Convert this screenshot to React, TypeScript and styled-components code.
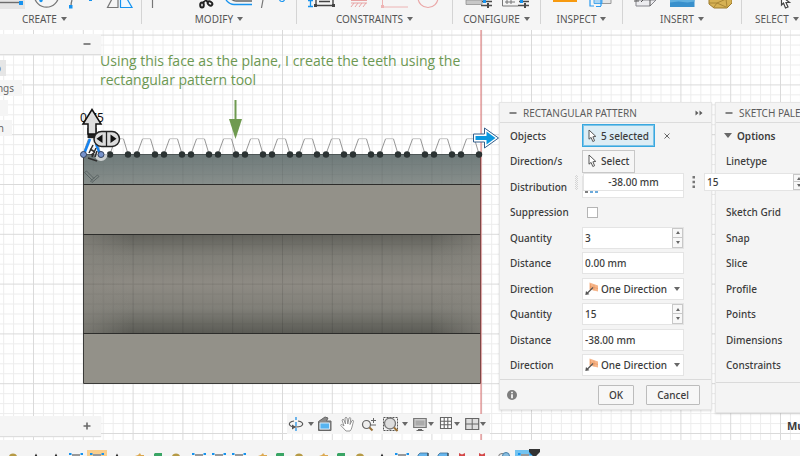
import React from "react";
import styled, { createGlobalStyle, css } from "styled-components";

const GlobalStyle = createGlobalStyle`
  * { box-sizing: border-box; }
  html, body { margin: 0; padding: 0; }
  body, button, input, select {
    font-family: "Noto Sans", "Open Sans", sans-serif;
    font-size: 10px;
    color: #3c3c3c;
  }
  body { overflow: hidden; }
  button, input, select { margin: 0; padding: 0; border: 0; background: none; border-radius: 0; }
`;

const Page = styled.div`
  display: flex;
  flex-direction: column;
  height: 100vh;
  background: #fff;
`;

/* Ribbon */

const Ribbon = styled.header`
  display: grid;
  grid-template-columns: 142fr 155fr 156fr 88fr 82fr 119fr 58fr;
  flex: none;
  height: 30px;
  background: #f5f5f5;
  overflow: hidden;
`;

const RibbonGroup = styled.section<{ $align?: "start" | "center" | "clip" }>`
  display: flex;
  flex-direction: column;
  align-items: ${(p) => (p.$align === "clip" ? "flex-start" : "center")};
  min-width: 0;
  height: 24px;
  border-right: 1px solid #d4d4d4;
  ${(p) => p.$align === "start" && css`align-items: flex-start;`}
  &:last-child { border-right: 0; }
`;

const RibbonIcons = styled.svg`
  display: block;
  flex: none;
  height: 11px;
`;

const RibbonLabel = styled.button<{ $inset?: number }>`
  display: flex;
  align-items: center;
  gap: 4px;
  flex: none;
  height: 16px;
  margin-left: ${(p) => p.$inset ?? 0}px;
  color: #555;
  font-size: 10px;
  line-height: 16px;
  white-space: nowrap;
`;

const Caret = styled.span<{ $up?: boolean; $small?: boolean; $large?: boolean }>`
  display: block;
  flex: none;
  width: 0;
  height: 0;
  border: solid transparent;
  border-width: ${(p) => (p.$small ? "0 2px" : p.$large ? "0 4px" : "0 3px")};
  ${(p) => (p.$up ? "border-bottom" : "border-top")}: ${(p) => (p.$small ? 3 : p.$large ? 5 : 4)}px solid #686868;
`;

/* Canvas */

const Canvas = styled.main`
  position: relative;
  flex: 1;
  min-height: 0;
  overflow: hidden;
`;

const Drawing = styled.svg`
  display: block;
  width: 100%;
  height: 100%;
`;

const Note = styled.p`
  position: absolute;
  left: 100px;
  top: 21px;
  width: 370px;
  margin: 0;
  color: #6c9852;
  font-family: "Open Sans", "Noto Sans", sans-serif;
  font-size: 14px;
  line-height: 19px;
`;

const BrowserColumn = styled.aside`
  position: absolute;
  left: 0;
  top: 4px;
  bottom: 4px;
  width: 101px;
  display: flex;
  flex-direction: column;
  justify-content: space-between;
  pointer-events: none;
`;

const BrowserBar = styled.div`
  display: flex;
  align-items: center;
  justify-content: flex-end;
  height: 20px;
  padding-right: 9px;
  background: #f5f5f5;
  box-shadow: 0 1px 1px #ddd;
`;

const IconButton = styled.button`
  display: flex;
  align-items: center;
  justify-content: center;
  flex: none;
  width: 10px;
  height: 12px;
`;

const BrowserTree = styled.ul`
  display: flex;
  flex-direction: column;
  align-items: flex-start;
  gap: 4px;
  margin: 6px 0 0;
  padding: 0;
  list-style: none;
`;

const TreeItem = styled.li<{ $active?: boolean; $tail: number }>`
  display: flex;
  justify-content: flex-end;
  width: ${(p) => p.$tail}px;
  height: 16px;
  padding-right: ${(p) => (p.$active ? 5 : 8)}px;
  background: ${(p) => (p.$active ? "#e6e6e6" : "#f5f5f5")};
  color: #666;
  line-height: 16px;
`;

const NavBar = styled.nav`
  position: absolute;
  left: 287px;
  bottom: 6px;
  display: flex;
  align-items: center;
  height: 20px;
  padding: 0 4px 0 1px;
  background: #f5f5f5;
`;

const NavButton = styled.button<{ $size?: "wide" | "widest" }>`
  display: flex;
  align-items: center;
  justify-content: space-between;
  height: 20px;
  width: ${(p) => (p.$size === "widest" ? 28 : p.$size === "wide" ? 26 : 22)}px;
  svg { display: block; flex: none; }
`;

/* Floating panels */

const Panel = styled.section<{ $left: number; $width: number }>`
  position: absolute;
  left: ${(p) => p.$left}px;
  top: 72px;
  width: ${(p) => p.$width}px;
  background: #f4f4f4;
  border: 1px solid #e6e6e6;
  box-shadow: 0 1px 2px rgba(0, 0, 0, 0.14);
`;

const PanelHeader = styled.header`
  display: flex;
  align-items: center;
  gap: 5px;
  height: 20px;
  padding: 0 8px;
  border-bottom: 1px solid #dcdcdc;
`;

const PanelTitle = styled.h2`
  flex: 1;
  margin: 0;
  color: #5c5c5c;
  font-size: 10px;
  font-weight: 400;
  line-height: 18px;
  white-space: nowrap;
`;

const PanelBody = styled.div`
  display: grid;
  grid-auto-rows: 1fr;
  min-height: 256px;
  padding: 0 10px 1px;
`;

const Row = styled.div`
  display: flex;
  align-items: center;
`;

const RowLabel = styled.label`
  flex: none;
  width: 72px;
  font-weight: 500;
  line-height: 14px;
  white-space: nowrap;
`;

const PanelFooter = styled.footer`
  display: flex;
  align-items: center;
  gap: 12px;
  height: 30px;
  padding: 0 11px 0 7px;
  border-top: 1px solid #dadada;
`;

const DialogButton = styled.button<{ $width: number }>`
  width: ${(p) => p.$width}px;
  height: 20px;
  border: 1px solid #bcbcbc;
  border-radius: 1px;
  background: #f7f7f7;
  font-weight: 500;
`;

const Spacer = styled.span`
  flex: 1;
`;

const PickButton = styled.button<{ $active?: boolean }>`
  display: flex;
  align-items: center;
  gap: 4px;
  height: 23px;
  padding: 0 5px;
  border: ${(p) => (p.$active ? "1px solid #38a8e0" : "1px solid #c8c8c8")};
  box-shadow: ${(p) => (p.$active ? "inset 0 0 0 1px #7cc4e8" : "none")};
  background: ${(p) => (p.$active ? "#dcedf5" : "#f6f6f6")};
  font-weight: 500;
  white-space: nowrap;
`;

const ClearButton = styled(IconButton)`
  margin-left: 7px;
`;

const Field = styled.div`
  position: relative;
  display: flex;
  width: 102px;
  height: 22px;
  border: 1px solid #e4e4e4;
  background: #fff;
`;

const FieldInput = styled.input<{ $center?: boolean }>`
  flex: 1;
  min-width: 0;
  padding: 0 2px;
  text-align: ${(p) => (p.$center ? "center" : "left")};
  outline: none;
  font-weight: 500;
`;

const Spinner = styled.span`
  display: grid;
  grid-template-rows: 1fr 1fr;
  flex: none;
  width: 11px;
`;

const SpinButton = styled.button`
  display: flex;
  align-items: center;
  justify-content: center;
  border: 1px solid #c8c8c8;
  background: #f8f8f8;
  & + & { border-top: 0; }
`;

const Choice = styled.select`
  appearance: none;
  width: 100%;
  padding-left: 18px;
  outline: none;
  font-weight: 500;
`;

const ChoiceIcon = styled.svg`
  position: absolute;
  left: 2px;
  top: 3px;
  pointer-events: none;
`;

const ChoiceCaret = styled.span`
  position: absolute;
  right: 3px;
  top: 8px;
  pointer-events: none;
`;

const Tick = styled.input`
  appearance: none;
  width: 11px;
  height: 11px;
  margin: 0 0 0 5px;
  border: 1px solid #b4b4b4;
  background: #fff;
`;

const SectionButton = styled.button`
  display: flex;
  align-items: center;
  gap: 5px;
  margin-left: -2px;
  font-weight: 600;
`;

const PaletteFoot = styled.div`
  height: 30px;
  margin-top: 3px;
  border-top: 1px solid #dadada;
`;

const ManipulatorBar = styled.form`
  position: absolute;
  left: 575px;
  top: 143px;
  display: flex;
  align-items: center;
  height: 18px;
`;

const Grip = styled.span`
  width: 3px;
  height: 15px;
  margin-right: 5px;
  background: repeating-conic-gradient(#d4d4d4 0 25%, #f4f4f4 0 50%) 0 0 / 2px 2px;
`;

const BarField = styled(Field)`
  width: 101px;
  height: 18px;
`;

const MoreButton = styled(IconButton)`
  width: 20px;
  height: 16px;
`;

const Status = styled.output`
  position: absolute;
  left: 787px;
  bottom: 7px;
  font-size: 11px;
  font-weight: 700;
  line-height: 14px;
  white-space: nowrap;
`;

/* Timeline */

const Timeline = styled.footer`
  display: flex;
  flex: none;
  height: 16px;
  padding: 9px 0 0 5px;
  background: #f4f4f4;
  overflow: hidden;
`;

const TimelineTrack = styled.div`
  display: grid;
  grid-template-columns: repeat(26, 1fr);
  width: 530px;
  flex: none;
`;

const TimelineItem = styled.button<{ $tint?: string }>`
  display: flex;
  justify-content: center;
  align-items: flex-start;
  height: 10px;
  margin-top: 1px;
  padding-top: 1px;
  background: ${(p) => p.$tint ?? "transparent"};
`;

const TimelineMarker = styled.svg`
  flex: none;
  margin-left: -6px;
`;

/* Glyphs */

const Minus = () => (
  <svg width="8" height="8" viewBox="0 0 8 8"><path d="M0.5 4h7" stroke="#6a6a6a" strokeWidth="1.6" /></svg>
);

const Plus = () => (
  <svg width="8" height="8" viewBox="0 0 8 8"><path d="M0.5 4h7M4 0.5v7" stroke="#6a6a6a" strokeWidth="1.6" /></svg>
);

const CursorGlyph = () => (
  <svg width="9" height="14" viewBox="0 0 9 14">
    <path d="M1 1v9.2l2.1-1.8 1.7 4.1 1.8-.8-1.7-3.9 2.9-.4z" fill="#fff" stroke="#555" strokeWidth="1" />
  </svg>
);

const DirectionGlyph = () => (
  <ChoiceIcon width="14" height="14" viewBox="0 0 14 14">
    <path d="M4.500 .5l8.500 3v6l-8.500-2z" fill="#f6b58a" />
    <path d="M5.500 2v5.500M9 3v5.500M5 4.500l8 2" stroke="#e8935c" strokeWidth=".6" />
    <path d="M8 5.500L2 11.500" stroke="#555" strokeWidth="1.200" />
    <path d="M.3 13l.7-4 3.400 3.300z" fill="#555" />
  </ChoiceIcon>
);

const CreateArt = () => (
  <RibbonIcons width="140" viewBox="0 0 140 11">
    <path d="M0 0h25v9H0z" fill="#e4e4e4" />
    <path d="M0 2.500h20" stroke="#6d6d6d" strokeWidth="1.400" />
    <path d="M19 1h4v4h-4z" fill="#1693ef" />
    <circle cx="46.500" cy="-5" r="12.200" fill="none" stroke="#777" strokeWidth="1.300" />
    <circle cx="41" cy="0.500" r="1.700" fill="#1693ef" />
    <path d="M72 0q-1 3-1 6" fill="none" stroke="#777" strokeWidth="1.300" />
    <path d="M69 5h3.500v3.500h-3.500zM89 -1h3v2h-3z" fill="#1693ef" />
    <path d="M113 -3l-5.500 10.500H118V-3" fill="none" stroke="#777" strokeWidth="1.200" />
    <path d="M120.500 -3V7.500H132L126 -3" fill="#f0f8ff" stroke="#1693ef" strokeWidth="1.200" />
  </RibbonIcons>
);

const ModifyArt = () => (
  <RibbonIcons width="154" viewBox="0 0 154 11">
    <path d="M10.500 0v8" stroke="#777" strokeWidth="1.200" />
    <g fill="none" stroke="#222" strokeWidth="2">
      <ellipse cx="60" cy="5" rx="1.800" ry="2.500" /><ellipse cx="68" cy="3.500" rx="2.500" ry="1.800" transform="rotate(35 68 3.500)" />
      <path d="M61 3l3-4M66 2l-4-3" />
    </g>
    <path d="M84 0q4 4.500 8 4.500h18" fill="none" stroke="#1693ef" strokeWidth="1.300" />
    <path d="M88 -2q3 3 6 3h16" fill="none" stroke="#666" strokeWidth="1.300" />
    <path d="M121 0l-1.500 8" stroke="#777" strokeWidth="1.200" />
    <circle cx="140" cy="-1" r="2.500" fill="none" stroke="#1693ef" strokeWidth="1.200" />
  </RibbonIcons>
);

const ConstraintsArt = () => (
  <RibbonIcons width="154" viewBox="0 0 154 11">
    <path d="M12.500 0v6M10 0.500h5M10 6.500h5" stroke="#1693ef" strokeWidth="1.300" />
    <path d="M17 5.500h19M18 0v5M35 0v5M21 1.500h11" stroke="#444" strokeWidth="1.400" />
    <path d="M16 4h3v3h-3zM34 4h3v3h-3z" fill="#444" />
    <path d="M53 0.500h16M53 3h16M56 3l-3 4M60 3l-3 4M64 3l-3 4M68 3l-3 4" stroke="#e8a3a3" strokeWidth="1" />
    <path d="M84.500 0v7h25.500" fill="none" stroke="#edb4b4" strokeWidth="1" />
    <path d="M83 5h3v3h-3z" fill="#edb4b4" />
    <circle cx="130" cy="-2.500" r="10" fill="none" stroke="#eaa7a7" strokeWidth="1.200" />
  </RibbonIcons>
);

const ConfigureArt = () => (
  <RibbonIcons width="66" viewBox="0 0 66 11">
    <path d="M2 0h16v4.500H2z" fill="#c8c8c8" stroke="#888" strokeWidth="0.700" />
    <path d="M38.500 0v6H54M41 2h10M43 0v4M47 0v4" fill="none" stroke="#777" strokeWidth="1" />
    <g stroke="#4b4b4b" strokeWidth="1.500">
      <path d="M18 1.500h10M17 5.500h11M55 1.500h10M54 5.500h11" />
      <path d="M24 3v5M61 3v5" strokeWidth="2" />
    </g>
    <path d="M19 -1h3v4h-3zM56 -1h3v4h-3z" fill="#1693ef" />
  </RibbonIcons>
);

const InspectArt = () => (
  <RibbonIcons width="60" viewBox="0 0 60 11">
    <path d="M1 -2h24v4H1z" fill="#f79a10" />
    <path d="M45 -1h14v4.500H45z" fill="#e6e6e6" stroke="#999" />
    <path d="M42 -1h8v4.500h-8z" fill="#a9d5f5" stroke="#4aa8ec" />
    <path d="M38 0v6h4M49 6v-6M44 6.500h5" fill="none" stroke="#2a9af0" strokeWidth="1.200" />
  </RibbonIcons>
);

const InsertArt = () => (
  <RibbonIcons width="100" viewBox="0 0 100 11">
    <path d="M4 0v6h14l6-6z" fill="#ececef" stroke="#85858b" />
    <path d="M18 0v6M2 1h5M9 2l3-3" stroke="#555" />
    <path d="M38 0h24.500v7H38z" fill="#3990cc" />
    <path d="M38 0h24.500v1.500l-7 1-9-1-8.500 1z" fill="#62b0df" />
    <path d="M77 -1h23v4l-5 5H82l-5-4z" fill="#d6b153" stroke="#9c7a2c" />
    <path d="M82 7l3-4 9-4M85 3l9 4M94 -1l1 8M77 3l8 0" stroke="#a98634" fill="none" />
  </RibbonIcons>
);

const SelectArt = () => (
  <RibbonIcons width="58" viewBox="0 0 58 11">
    <path d="M39.500 -4v9l2-2 2 5 2.500-1-2-4.500h3.500z" fill="#fff" stroke="#444" strokeWidth="1.200" />
  </RibbonIcons>
);

const ribbonGroups = [
  { label: "CREATE", Art: CreateArt, align: "start" as const, inset: 22 },
  { label: "MODIFY", Art: ModifyArt, align: "center" as const },
  { label: "CONSTRAINTS", Art: ConstraintsArt, align: "center" as const },
  { label: "CONFIGURE", Art: ConfigureArt, align: "center" as const },
  { label: "INSPECT", Art: InspectArt, align: "center" as const },
  { label: "INSERT", Art: InsertArt, align: "center" as const },
  { label: "SELECT", Art: SelectArt, align: "clip" as const, inset: 13 },
];

const toothOffsets = Array.from({ length: 15 }, (_, i) => 83 + i * 27);

const minorLines = "M10.500 0v49.800M20.500 0v49.800M30.400 0v49.800M40.400 0v49.800M0 10.500h49.800M0 20.500h49.800M0 30.400h49.800M0 40.400h49.800";

const Scene = () => (
  <Drawing role="img" aria-label="Belt sketch">
    <defs>
      <pattern id="grid" x="33" y="4.600" width="49.800" height="49.800" patternUnits="userSpaceOnUse">
        <path d={minorLines} stroke="#ededed" />
        <path d="M.5 0v49.800M0 .5h49.800" stroke="#dadada" />
      </pattern>
      <pattern id="gridShade" x="33" y="4.600" width="49.800" height="49.800" patternUnits="userSpaceOnUse">
        <path d={minorLines} stroke="#000" strokeOpacity=".05" />
        <path d="M.5 0v49.800M0 .5h49.800" stroke="#000" strokeOpacity=".11" />
      </pattern>
      <linearGradient id="top" x1="0" y1="0" x2="0" y2="1">
        <stop offset="0" stopColor="#6e7a7a" /><stop offset="1" stopColor="#878e8b" />
      </linearGradient>
      <linearGradient id="groove" x1="0" y1="0" x2="0" y2="1">
        <stop offset="0" stopColor="#61615b" /><stop offset=".22" stopColor="#7f7e77" />
        <stop offset=".5" stopColor="#8e8b84" /><stop offset=".75" stopColor="#807f78" />
        <stop offset="1" stopColor="#5b5b55" />
      </linearGradient>
      <linearGradient id="edge" x1="0" y1="0" x2="1" y2="0">
        <stop offset="0" stopColor="#8b8982" stopOpacity=".6" /><stop offset=".12" stopColor="#8b8982" stopOpacity="0" />
        <stop offset=".88" stopColor="#8b8982" stopOpacity="0" /><stop offset="1" stopColor="#8b8982" stopOpacity=".6" />
      </linearGradient>
    </defs>
    <rect width="100%" height="100%" fill="url(#grid)" />
    <rect x="83" y="124" width="398" height="30" fill="url(#top)" />
    <rect x="83" y="124" width="398" height="30" fill="url(#gridShade)" opacity=".6" />
    <rect x="83" y="154" width="398" height="50" fill="#939189" />
    <rect x="83" y="204" width="398" height="99" fill="url(#groove)" />
    <rect x="83" y="204" width="398" height="99" fill="url(#edge)" />
    <rect x="83" y="204" width="398" height="99" fill="url(#gridShade)" />
    <rect x="83" y="303" width="398" height="50" fill="#939189" />
    <path d="M83.500 124V353.500H480.500V124" fill="none" stroke="#3b3b39" />
    <path d="M83 154.500h398M83 204.500h398M83 303.500h398" stroke="#2d2d2b" strokeWidth="1.200" />
    <path d="M83 124.500h398" stroke="#4d5656" strokeWidth="1.200" />
    <path d="M481 0V1000" stroke="#dc5a5a" strokeOpacity=".6" strokeWidth="1.400" />
    {toothOffsets.map((x, i) => (
      <g key={x}>
        <path d={`M${x} 124L${x + 5.5} 109M${x + 18} 124L${x + 13.5} 109`} stroke="#8a8a8a" strokeWidth=".9" />
        <path d={`M${x + 5.5} 108.700h8`} stroke="#b5b5b5" strokeWidth=".8" />
        {i > 0 && <circle cx={x} cy="124.500" r="3.200" fill="#2b3333" />}
        {i > 0 && <circle cx={x + 18} cy="124.500" r="3.200" fill="#2b3333" />}
      </g>
    ))}
    <path d="M235.500 70v22" stroke="#6f9a50" strokeWidth="2" />
    <path d="M229 89h13l-6.500 20z" fill="#6f9a50" />
    <path d="M473.500 104h11v-6l14 10-14 10v-6h-11z" fill="#fff" stroke="#335f8c" strokeWidth="1" />
    <path d="M475.500 106h11v-4.500l9 6.500-9 6.500V110h-11z" fill="#0c98df" />
    <path d="M84.500 142.500l8 8M86.500 141l7.500 7.500M92 152.500l7-6-1.500-1.500-7 6zM86.500 141l-2 1.500" fill="none" stroke="#566060" strokeWidth=".9" />
    <circle cx="101" cy="124.500" r="6.500" fill="#fff" opacity=".65" />
    <path d="M84 124l6-15" stroke="#1683f0" strokeWidth="2.500" />
    <path d="M100 124l-4-10" stroke="#1683f0" strokeWidth="2.500" />
    <path d="M88 128l9 3M89 123l4-8M92 127l4-9M95 127l2-6M90 119l5 3M91 125l4-3" stroke="#2e2e2e" strokeWidth="1.500" />
    <circle cx="83.500" cy="124.500" r="3" fill="#7793cc" stroke="#34435e" />
    <circle cx="101" cy="124.500" r="3" fill="#7793cc" stroke="#34435e" />
    <text x="80" y="92" fill="#111" fontSize="12" fontFamily="Noto Sans, sans-serif">0.75</text>
    <path d="M87.500 98h9v10h-9z" fill="#222" />
    <path d="M92 79.500l9 14.500h-5v10h-8V94H83z" fill="#dedede" stroke="#111" strokeWidth="1.500" />
    <rect x="94" y="101.500" width="25.500" height="15" rx="7.500" fill="#dcdcdc" stroke="#222" strokeWidth="1.500" />
    <path d="M106.500 102v14" stroke="#222" strokeWidth="1.300" />
    <path d="M102.500 104.500v8.500l-6-4.200zM110.500 104.500v8.500l6-4.200z" fill="#111" />
  </Drawing>
);

const Stepper = () => (
  <Spinner>
    <SpinButton type="button" aria-label="Increase"><Caret $up $small /></SpinButton>
    <SpinButton type="button" aria-label="Decrease"><Caret $small /></SpinButton>
  </Spinner>
);

const InputRow = ({ id, label, value, stepper }: { id: string; label: string; value: string; stepper?: boolean }) => (
  <Row>
    <RowLabel htmlFor={id}>{label}</RowLabel>
    <Field>
      <FieldInput id={id} defaultValue={value} />
      {stepper && <Stepper />}
    </Field>
  </Row>
);

const DirectionRow = ({ id }: { id: string }) => (
  <Row>
    <RowLabel htmlFor={id}>Direction</RowLabel>
    <Field>
      <DirectionGlyph />
      <Choice id={id}><option>One Direction</option></Choice>
      <ChoiceCaret><Caret /></ChoiceCaret>
    </Field>
  </Row>
);

const PatternDialog = () => (
  <Panel $left={499} $width={213}>
    <PanelHeader>
      <IconButton aria-label="Collapse"><Minus /></IconButton>
      <PanelTitle>RECTANGULAR PATTERN</PanelTitle>
      <svg width="8" height="6" viewBox="0 0 8 6"><path d="M.5.5L3.500 3 .5 5.500zM4.500.5L7.500 3 4.500 5.500z" fill="#5c5c5c" /></svg>
    </PanelHeader>
    <PanelBody>
      <Row>
        <RowLabel htmlFor="objects">Objects</RowLabel>
        <PickButton id="objects" $active><CursorGlyph />5 selected</PickButton>
        <ClearButton aria-label="Clear objects">
          <svg width="6" height="6" viewBox="0 0 6 6"><path d="M.5.5l5 5M5.500.5l-5 5" stroke="#666" /></svg>
        </ClearButton>
      </Row>
      <Row>
        <RowLabel htmlFor="directions">Direction/s</RowLabel>
        <PickButton id="directions"><CursorGlyph />Select</PickButton>
      </Row>
      <Row>
        <RowLabel htmlFor="distribution">Distribution</RowLabel>
        <Field>
          <Choice id="distribution" />
          <ChoiceIcon width="14" height="17" viewBox="0 0 14 17">
            <path d="M0 12h3" stroke="#555" strokeWidth="1.500" /><path d="M5 12h3M10 12h3" stroke="#3c8fd0" strokeWidth="1.500" />
          </ChoiceIcon>
        </Field>
      </Row>
      <Row>
        <RowLabel htmlFor="suppression">Suppression</RowLabel>
        <Tick id="suppression" type="checkbox" />
      </Row>
      <InputRow id="quantity-1" label="Quantity" value="3" stepper />
      <InputRow id="distance-1" label="Distance" value="0.00 mm" />
      <DirectionRow id="direction-1" />
      <InputRow id="quantity-2" label="Quantity" value="15" stepper />
      <InputRow id="distance-2" label="Distance" value="-38.00 mm" />
      <DirectionRow id="direction-2" />
    </PanelBody>
    <PanelFooter>
      <IconButton aria-label="Help">
        <svg width="12" height="12" viewBox="0 0 12 12">
          <circle cx="6" cy="6" r="6" fill="#7d7d7d" />
          <path d="M5 2.200h2v1.600H5zM5 5h2v4.800H5z" fill="#fff" />
        </svg>
      </IconButton>
      <Spacer />
      <DialogButton $width={36}>OK</DialogButton>
      <DialogButton $width={54}>Cancel</DialogButton>
    </PanelFooter>
  </Panel>
);

const paletteRows = ["Linetype", "", "Sketch Grid", "Snap", "Slice", "Profile", "Points", "Dimensions", "Constraints"];

const SketchPalette = () => (
  <Panel $left={715} $width={213}>
    <PanelHeader>
      <IconButton aria-label="Collapse"><Minus /></IconButton>
      <PanelTitle>SKETCH PALETTE</PanelTitle>
    </PanelHeader>
    <PanelBody>
      <Row>
        <SectionButton aria-expanded="true"><Caret $large />Options</SectionButton>
      </Row>
      {paletteRows.map((name, i) => <Row key={i}>{name && <RowLabel as="span">{name}</RowLabel>}</Row>)}
    </PanelBody>
    <PaletteFoot />
  </Panel>
);

const Manipulator = () => (
  <ManipulatorBar>
    <Grip />
    <BarField><FieldInput $center aria-label="Distance" defaultValue="-38.00 mm" /></BarField>
    <MoreButton type="button" aria-label="More">
      <svg width="4" height="12" viewBox="0 0 4 12"><path d="M.5 0h2.500v2.500H.5zM.5 4.700h2.500v2.500H.5zM.5 9.400h2.500v2.500H.5z" fill="#777" /></svg>
    </MoreButton>
    <BarField><FieldInput aria-label="Quantity" defaultValue="15" /><Stepper /></BarField>
  </ManipulatorBar>
);

const NavTools = () => (
  <NavBar aria-label="View controls">
    <NavButton $size="wide" aria-label="Orbit">
      <svg width="16" height="16" viewBox="0 0 16 16">
        <path d="M8 1v3M8 6v4M8 12v3" stroke="#2492e6" strokeWidth="1.300" />
        <path d="M6 5C-1 6 0 11 8 11s9-5 2-6" fill="none" stroke="#555" strokeWidth="1.200" />
        <path d="M4 8.500v5l4-2.500z" fill="#555" />
      </svg>
      <Caret />
    </NavButton>
    <NavButton aria-label="Look at">
      <svg width="22" height="16" viewBox="-4 0 22 16">
        <path d="M.5 5.500L7 1l3 1-1.500 3H13v9.500H.5z" fill="#8a8a8a" stroke="#666" />
        <path d="M2 7h9.500v6H2z" fill="#56b4f1" stroke="#d5eafa" />
      </svg>
    </NavButton>
    <NavButton aria-label="Pan">
      <svg width="22" height="16" viewBox="-4 0 22 16">
        <path d="M6 15C4 13 2.500 11 .8 9.500.7 8 2 8.200 4 10L2 4q1-1.500 2 0l1.500 4L5 2q1-1.500 2 0l.8 6L9 2q1.200-1 1.800.3L10 8.500l2-4q1.300-.8 1.500.6L12 11q-.5 2.500-2 4z" fill="#fff" stroke="#8a8a8a" strokeWidth=".9" />
      </svg>
    </NavButton>
    <NavButton aria-label="Zoom">
      <svg width="22" height="16" viewBox="-4 0 22 16">
        <circle cx="4.500" cy="8.500" r="4" fill="#eee" stroke="#666" strokeWidth="1.200" />
        <path d="M7.500 11.500l3 3" stroke="#9b7135" strokeWidth="2" />
        <path d="M9 4.500h5M11.500 2v5M9 9h5" stroke="#666" />
      </svg>
    </NavButton>
    <NavButton $size="widest" aria-label="Fit">
      <svg width="19" height="16" viewBox="-3 0 19 16">
        <path d="M.5 1.500h14v13H.5z" fill="none" stroke="#555" strokeDasharray="2 1" />
        <circle cx="7" cy="7.500" r="5.500" fill="#ddd" stroke="#777" strokeWidth="1.300" />
        <path d="M11 11.500l3.500 3.500" stroke="#9b7135" strokeWidth="2" />
      </svg>
      <Caret />
    </NavButton>
    <NavButton $size="wide" aria-label="Display settings">
      <svg width="19" height="16" viewBox="-5 0 19 16">
        <path d="M.7 2.500h12.500v9H.7z" fill="#ccc" stroke="#777" strokeWidth="1.200" />
        <path d="M2.500 4.500h9v5h-9z" fill="#aaa" /><path d="M5 13.500h4M3.500 14.500h7" stroke="#666" />
      </svg>
      <Caret />
    </NavButton>
    <NavButton $size="wide" aria-label="Grid and snaps">
      <svg width="18" height="16" viewBox="-6 0 18 16">
        <path d="M.5 1.500h11v11H.5zM4.200 1v12M7.800 1v12M0 5.200h12M0 8.800h12" fill="#fff" stroke="#666" strokeWidth="1.100" />
      </svg>
      <Caret />
    </NavButton>
    <NavButton $size="wide" aria-label="Viewports">
      <svg width="20" height="16" viewBox="-5 0 20 16">
        <path d="M.7 2.500h13v11H.7z" fill="#ddd" stroke="#666" strokeWidth="1.200" />
        <path d="M7.200 2v12M0 8h14" stroke="#666" />
      </svg>
      <Caret />
    </NavButton>
  </NavBar>
);

type Feature = "body" | "point" | "sketch" | "edge" | "green" | "extrude" | "cut" | "combine";

const timelineFeatures: Feature[] = [
  "body", "point", "point", "sketch", "sketch", "point", "edge", "green", "body", "sketch", "sketch", "sketch", "edge",
  "green", "body", "edge", "green", "body", "point", "sketch", "extrude", "extrude", "cut", "cut", "combine", "sketch",
];

const featureArt: Record<Feature, React.ReactNode> = {
  body: <ellipse cx="5" cy="6" rx="4" ry="3.500" fill="#b69a45" />,
  point: <path d="M7 2.500l2 4H5z" fill="#222" />,
  sketch: <><path d="M3 3h8v4H3z" fill="#999" /><path d="M0 2h2.500v2H0zM11.500 2h2.500v2h-2.500z" fill="#1693ef" /></>,
  edge: <path d="M2 6l6-2 2-2 1 2h3v2H8z" fill="#dca84f" />,
  green: <path d="M3 3l1-1h7v4H3z" fill="#3aa565" />,
  extrude: <><path d="M2 4l2-2h8v4H2z" fill="#66b6ee" stroke="#3f7198" strokeWidth=".8" /><path d="M12 2v4" stroke="#333" /></>,
  cut: <path d="M2 2l3 1.500L8 2v3H2z" fill="#d44848" />,
  combine: <><circle cx="5" cy="6" r="3.500" fill="#eee" stroke="#777" /><circle cx="9" cy="5" r="3.500" fill="#87bddf" stroke="#477fa8" /></>,
};

const App = () => (
  <>
    <GlobalStyle />
    <Page>
      <Ribbon>
        {ribbonGroups.map(({ label, Art, align, inset }) => (
          <RibbonGroup key={label} $align={align}>
            <Art />
            <RibbonLabel $inset={inset}>{label}<Caret /></RibbonLabel>
          </RibbonGroup>
        ))}
      </Ribbon>
      <Canvas>
        <Scene />
        <Note>Using this face as the plane, I create the teeth using the rectangular pattern tool</Note>
        <BrowserColumn>
          <div>
            <BrowserBar><IconButton aria-label="Collapse browser"><Minus /></IconButton></BrowserBar>
            <BrowserTree>
              <TreeItem $active $tail={6}>o</TreeItem>
              <TreeItem $tail={22}>ngs</TreeItem>
              <TreeItem $tail={4} />
              <TreeItem $tail={12}>n</TreeItem>
            </BrowserTree>
          </div>
          <BrowserBar><IconButton aria-label="Expand comments"><Plus /></IconButton></BrowserBar>
        </BrowserColumn>
        <NavTools />
        <PatternDialog />
        <SketchPalette />
        <Manipulator />
        <Status>Mu</Status>
      </Canvas>
      <Timeline>
        <TimelineTrack>
          {timelineFeatures.map((feature, i) => (
            <TimelineItem key={i} aria-label={feature} $tint={i === 4 ? "#f9cf8f" : i === 25 ? "#73c3f0" : undefined}>
              <svg width="14" height="8" viewBox="0 0 14 8">{featureArt[feature]}</svg>
            </TimelineItem>
          ))}
        </TimelineTrack>
        <TimelineMarker width="11" height="8" viewBox="0 0 11 8"><path d="M0 0h11v3L7.500 6.500V8H3.500V6.500L0 3z" fill="#333" /></TimelineMarker>
      </Timeline>
    </Page>
  </>
);

export default App;
